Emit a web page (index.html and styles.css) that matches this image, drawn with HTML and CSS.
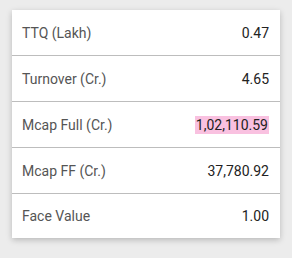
FILE: index.html
```html
<!DOCTYPE html>
<html>
<head>
<meta charset="utf-8">
<link rel="stylesheet" href="styles.css">
</head>
<body>
<div class="card">
  <div class="row"><span class="label">TTQ (Lakh)</span><span class="value">0.47</span></div>
  <div class="row"><span class="label">Turnover (Cr.)</span><span class="value">4.65</span></div>
  <div class="row"><span class="label">Mcap Full (Cr.)</span><span class="value hl">1,02,110.59</span></div>
  <div class="row"><span class="label">Mcap FF (Cr.)</span><span class="value">37,780.92</span></div>
  <div class="row"><span class="label">Face Value</span><span class="value">1.00</span></div>
</div>
</body>
</html>
```
FILE: styles.css
```css
html, body {
  margin: 0;
  padding: 0;
}
body {
  width: 292px;
  height: 258px;
  background: #ececec;
  font-family: Roboto, "Liberation Sans", sans-serif;
  padding: 10px 12px 0 12px;
  box-sizing: border-box;
}
.card {
  background: #fff;
  box-shadow: 0 2px 6px rgba(0,0,0,0.22);
  display: flex;
  flex-direction: column;
}
.row {
  height: 45px;
  display: flex;
  align-items: center;
  justify-content: space-between;
  padding: 0 11px 0 10px;
  border-bottom: 1px solid #bdbdbd;
  font-size: 14px;
}
.row:last-child {
  border-bottom: none;
  height: 44px;
}
.label {
  color: #555;
}
.value {
  color: #222;
}
.hl {
  background: #f9c1e0;
  padding: 1px 1px;
}
```
